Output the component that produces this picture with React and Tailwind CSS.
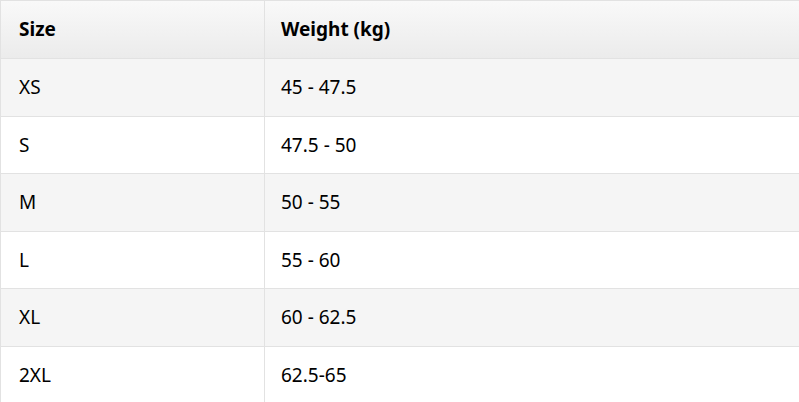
const rows = [
  ["XS", "45 - 47.5"],
  ["S", "47.5 - 50"],
  ["M", "50 - 55"],
  ["L", "55 - 60"],
  ["XL", "60 - 62.5"],
  ["2XL", "62.5-65"],
];

export default function App() {
  return (
    <div className="w-[799px] h-[402px] overflow-hidden bg-white">
      <table
        className="w-[820px] border-collapse text-[19px] text-black"
        style={{ fontFamily: '"Noto Sans", "Open Sans", sans-serif' }}
      >
        <thead>
          <tr className="h-[58px] bg-gradient-to-b from-[#f9f9f9] to-[#ebebeb]">
            <th className="w-[264px] border-t border-l border-[#e2e2e2] pl-[18px] text-left font-bold">
              Size
            </th>
            <th className="border-t border-l border-[#e2e2e2] pl-[16px] text-left font-bold">
              Weight (kg)
            </th>
          </tr>
        </thead>
        <tbody>
          {rows.map(([size, weight], i) => (
            <tr
              key={size}
              className={
                "h-[57.5px] border-t border-[#e2e2e2] " +
                (i % 2 === 0 ? "bg-[#f5f5f5]" : "bg-white")
              }
            >
              <td className="border-l border-[#e2e2e2] pl-[18px]">{size}</td>
              <td className="border-l border-[#e2e2e2] pl-[16px]">{weight}</td>
            </tr>
          ))}
        </tbody>
      </table>
    </div>
  );
}
